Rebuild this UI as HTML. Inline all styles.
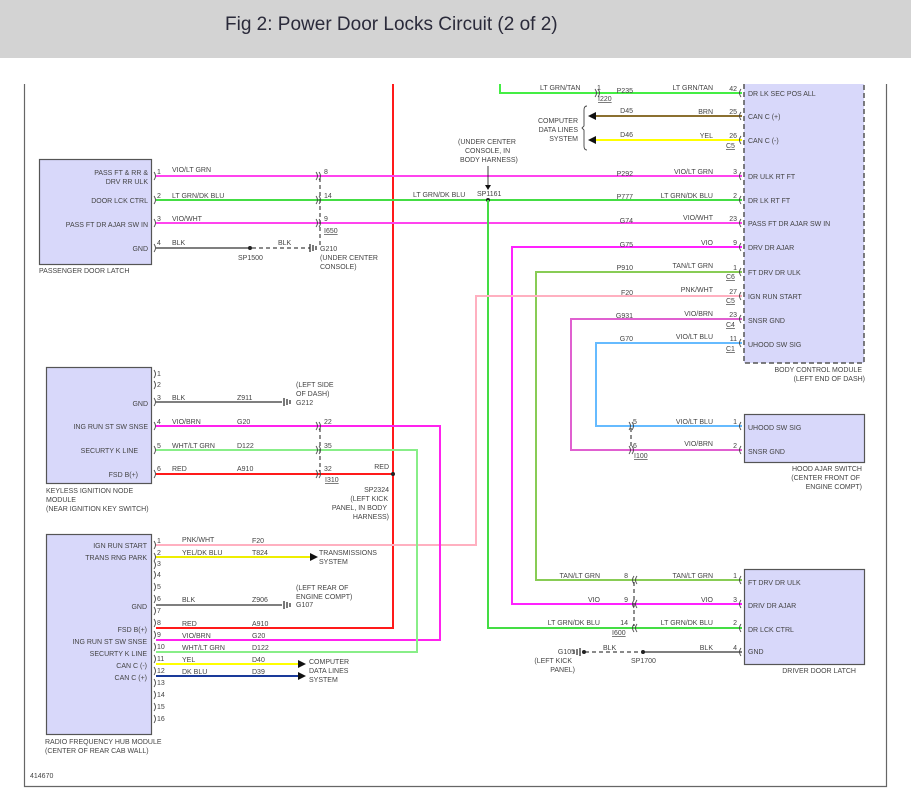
<!DOCTYPE html>
<html><head><meta charset="utf-8"><style>
html,body{margin:0;padding:0;background:#fff;width:911px;height:803px;overflow:hidden}
svg{display:block}
text{font-family:"Liberation Sans",Arial,sans-serif;font-size:7px;fill:#444}
.t{font-size:19px;fill:#2a2a3a}
.w{fill:none;stroke-width:2}
.c{fill:none;stroke:#444;stroke-width:0.9}
.d{stroke:#444;stroke-width:1.2;stroke-dasharray:4 3;fill:none}
.box{fill:#d8d8fa;stroke:#555;stroke-width:1.2}
</style></head><body>
<svg width="911" height="803" viewBox="0 0 911 803" xmlns="http://www.w3.org/2000/svg">
<rect x="0" y="0" width="911" height="58" fill="#d3d3d3"/>
<text class="t" x="225" y="30">Fig 2: Power Door Locks Circuit (2 of 2)</text>
<path d="M24.5 84V786.5H886.5V84" fill="none" stroke="#666" stroke-width="1.2"/>

<rect class="box" x="39.5" y="159.5" width="112" height="105"/>
<rect class="box" x="46.5" y="367.5" width="105" height="116"/>
<rect class="box" x="46.5" y="534.5" width="105" height="200"/>
<rect x="744" y="84" width="120" height="279" fill="#d8d8fa"/>
<path d="M744 84V363H864V84" fill="none" stroke="#555" stroke-width="1.5" stroke-dasharray="5 3"/>
<rect class="box" x="744.5" y="414.5" width="120" height="48"/>
<rect class="box" x="744.5" y="569.5" width="120" height="95"/>

<path class="w" stroke="#ff1a1a" d="M393 84V628H156"/>
<path class="w" stroke="#ff1a1a" d="M156 474H393"/>
<circle cx="393" cy="474" r="2" fill="#222"/>

<path class="w" stroke="#ff44ee" d="M156 176H742"/>
<path class="w" stroke="#44dd44" d="M156 200H742"/>
<path class="w" stroke="#ff44ee" d="M156 223H742"/>
<path stroke="#555" stroke-width="1.5" d="M156 248H250"/>
<path class="d" d="M252 248H310"/>
<circle cx="250" cy="248" r="2" fill="#222"/>
<path d="M310 244V252M313 245V251M316 246V250" stroke="#222" stroke-width="1.2"/>

<path class="w" stroke="#44ee44" d="M500 84V93H742"/>
<path class="w" stroke="#8b7030" d="M596 116H742"/>
<path class="w" stroke="#ffff00" d="M596 140H742"/>
<polygon points="588,116 596,112 596,120" fill="#111"/>
<polygon points="588,140 596,136 596,144" fill="#111"/>
<path d="M587 106 Q584 106 584 110 V126 L582 128 L584 130 V146 Q584 150 587 150" class="c"/>

<path stroke="#222" stroke-width="0.9" d="M488 166V186"/><polygon points="485,185 491,185 488,190" fill="#111"/>
<circle cx="488" cy="200" r="2" fill="#222"/>
<path class="w" stroke="#44dd44" d="M488 200V628H742"/>
<path class="w" stroke="#ff22ff" d="M742 247H512V604H742"/>
<path class="w" stroke="#88cc55" d="M742 272H536V580H742"/>
<path class="w" stroke="#ffb0c0" d="M742 296H476V545H156"/>
<path class="w" stroke="#e060d0" d="M742 319H571V450H742"/>
<path class="w" stroke="#66bbff" d="M742 343H596V426H742"/>

<path stroke="#555" stroke-width="1.5" d="M156 402H282"/>
<path d="M284 398V406M287 399V405M290 400V404" stroke="#222" stroke-width="1.2"/>
<path class="w" stroke="#ff22ee" d="M156 426H440V640H156"/>
<path class="w" stroke="#88ee88" d="M156 450H417V652H156"/>

<path class="w" stroke="#eeee00" d="M156 557H310"/><polygon points="310,553 318,557 310,561" fill="#111"/>
<path stroke="#555" stroke-width="1.5" d="M156 605H282"/>
<path d="M284 601V609M287 602V608M290 603V607" stroke="#222" stroke-width="1.2"/>
<path class="w" stroke="#ffff00" d="M156 664H298"/><polygon points="298,660 306,664 298,668" fill="#111"/>
<path class="w" stroke="#1a3a9a" d="M156 676H298"/><polygon points="298,672 306,676 298,680" fill="#111"/>

<path stroke="#555" stroke-width="1.5" d="M643 652H742"/>
<path class="d" d="M585 652H641"/>
<circle cx="643" cy="652" r="2" fill="#222"/><circle cx="584" cy="652" r="2" fill="#222"/>
<path d="M580 648V656M577 649V655M574 650V654" stroke="#222" stroke-width="1.2"/>

<path class="d" d="M320 178V247"/><path class="d" d="M320 428V472"/>
<path class="d" d="M631 428V448"/><path class="d" d="M634 582V626"/>
<g class="c">
<path d="M154 172q3 4 0 8M154 196q3 4 0 8M154 219q3 4 0 8M154 244q3 4 0 8"/>
<path d="M154 370q3 4 0 8M154 381q3 4 0 8M154 398q3 4 0 8M154 422q3 4 0 8M154 446q3 4 0 8M154 470q3 4 0 8"/>
<path d="M154 541q3 4 0 8M154 553q3 4 0 8M154 561q3 4 0 8M154 571q3 4 0 8M154 583q3 4 0 8M154 595q3 4 0 8M154 607q3 4 0 8M154 619q3 4 0 8M154 631q3 4 0 8M154 643q3 4 0 8M154 655q3 4 0 8M154 667q3 4 0 8M154 679q3 4 0 8M154 691q3 4 0 8M154 703q3 4 0 8M154 715q3 4 0 8"/>
<path d="M316 172q3 4 0 8M319 172q3 4 0 8M316 196q3 4 0 8M319 196q3 4 0 8M316 219q3 4 0 8M319 219q3 4 0 8"/>
<path d="M316 422q3 4 0 8M319 422q3 4 0 8M316 446q3 4 0 8M319 446q3 4 0 8M316 470q3 4 0 8M319 470q3 4 0 8"/>
<path d="M595 89q3 4 0 8M598 89q3 4 0 8"/>
<path d="M629 422q3 4 0 8M632 422q3 4 0 8M629 446q3 4 0 8M632 446q3 4 0 8"/>
<path d="M634 576q-3 4 0 8M637 576q-3 4 0 8M634 600q-3 4 0 8M637 600q-3 4 0 8M634 624q-3 4 0 8M637 624q-3 4 0 8"/>
<path d="M741 89q-3 4 0 8M741 112q-3 4 0 8M741 136q-3 4 0 8M741 172q-3 4 0 8M741 196q-3 4 0 8M741 219q-3 4 0 8M741 243q-3 4 0 8M741 268q-3 4 0 8M741 292q-3 4 0 8M741 315q-3 4 0 8M741 339q-3 4 0 8"/>
<path d="M741 422q-3 4 0 8M741 446q-3 4 0 8M741 576q-3 4 0 8M741 600q-3 4 0 8M741 624q-3 4 0 8M741 648q-3 4 0 8"/>
</g>

<g text-anchor="end">
<text x="148" y="175">PASS FT &amp; RR &amp;</text><text x="148" y="184">DRV RR ULK</text>
<text x="148" y="203">DOOR LCK CTRL</text><text x="148" y="227">PASS FT DR AJAR SW IN</text><text x="148" y="251">GND</text>
<text x="148" y="406">GND</text><text x="148" y="429">ING RUN ST SW SNSE</text><text x="138" y="453">SECURTY K LINE</text><text x="138" y="477">FSD B(+)</text>
<text x="147" y="548">IGN RUN START</text><text x="147" y="560">TRANS RNG PARK</text><text x="147" y="609">GND</text>
<text x="147" y="632">FSD B(+)</text><text x="147" y="644">ING RUN ST SW SNSE</text><text x="147" y="656">SECURTY K LINE</text>
<text x="147" y="668">CAN C (-)</text><text x="147" y="680">CAN C (+)</text>
<text x="389" y="469">RED</text><text x="389" y="492">SP2324</text><text x="388" y="501">(LEFT KICK</text><text x="387" y="510">PANEL, IN BODY</text><text x="389" y="519">HARNESS)</text>
<text x="633" y="113">D45</text><text x="633" y="137">D46</text>
<text x="578" y="123">COMPUTER</text><text x="578" y="132">DATA LINES</text><text x="578" y="141">SYSTEM</text>
<text x="633" y="93">P235</text><text x="633" y="176">P292</text><text x="633" y="199">P777</text><text x="633" y="223">G74</text><text x="633" y="247">G75</text><text x="633" y="270">P910</text><text x="633" y="295">F20</text><text x="633" y="318">G931</text><text x="633" y="341">G70</text>
<text x="713" y="90">LT GRN/TAN</text><text x="713" y="114">BRN</text><text x="713" y="138">YEL</text><text x="713" y="174">VIO/LT GRN</text><text x="713" y="198">LT GRN/DK BLU</text><text x="713" y="220">VIO/WHT</text><text x="713" y="245">VIO</text><text x="713" y="268">TAN/LT GRN</text><text x="713" y="292">PNK/WHT</text><text x="713" y="316">VIO/BRN</text><text x="713" y="339">VIO/LT BLU</text>
<text x="713" y="424">VIO/LT BLU</text><text x="713" y="446">VIO/BRN</text>
<text x="600" y="578">TAN/LT GRN</text><text x="600" y="602">VIO</text><text x="600" y="625">LT GRN/DK BLU</text>
<text x="713" y="578">TAN/LT GRN</text><text x="713" y="602">VIO</text><text x="713" y="625">LT GRN/DK BLU</text><text x="713" y="650">BLK</text>
<text x="737" y="91">42</text><text x="737" y="114">25</text><text x="737" y="138">26</text><text x="737" y="174">3</text><text x="737" y="198">2</text><text x="737" y="221">23</text><text x="737" y="245">9</text><text x="737" y="270">1</text><text x="737" y="294">27</text><text x="737" y="317">23</text><text x="737" y="341">11</text>
<text x="737" y="424">1</text><text x="737" y="448">2</text><text x="737" y="578">1</text><text x="737" y="602">3</text><text x="737" y="625">2</text><text x="737" y="650">4</text>
<text x="628" y="578">8</text><text x="628" y="602">9</text><text x="628" y="625">14</text>
<text x="862" y="372">BODY CONTROL MODULE</text><text x="865" y="381">(LEFT END OF DASH)</text>
<text x="862" y="471">HOOD AJAR SWITCH</text><text x="860" y="480">(CENTER FRONT OF</text><text x="862" y="489">ENGINE COMPT)</text>
<text x="856" y="673">DRIVER DOOR LATCH</text>
<text x="575" y="654">G105</text><text x="572" y="663">(LEFT KICK</text><text x="575" y="672">PANEL)</text>
</g>
<g>
<text x="157" y="174">1</text><text x="172" y="172">VIO/LT GRN</text>
<text x="157" y="198">2</text><text x="172" y="198">LT GRN/DK BLU</text>
<text x="157" y="221">3</text><text x="172" y="221">VIO/WHT</text>
<text x="157" y="245">4</text><text x="172" y="245">BLK</text><text x="278" y="245">BLK</text>
<text x="238" y="260">SP1500</text><text x="320" y="251">G210</text><text x="320" y="260">(UNDER CENTER</text><text x="320" y="269">CONSOLE)</text>
<text x="39" y="273">PASSENGER DOOR LATCH</text>
<text x="324" y="174">8</text><text x="324" y="198">14</text><text x="324" y="221">9</text><text x="324" y="233" text-decoration="underline">I650</text>
<text x="413" y="197">LT GRN/DK BLU</text>
<text x="458" y="144">(UNDER CENTER</text><text x="465" y="153">CONSOLE, IN</text><text x="460" y="162">BODY HARNESS)</text>
<text x="477" y="196">SP1161</text>
<text x="540" y="90">LT GRN/TAN</text><text x="597" y="90">1</text><text x="598" y="101" text-decoration="underline">I220</text>
<text x="726" y="148" text-decoration="underline">C5</text><text x="726" y="279" text-decoration="underline">C6</text><text x="726" y="303" text-decoration="underline">C5</text><text x="726" y="327" text-decoration="underline">C4</text><text x="726" y="351" text-decoration="underline">C1</text>
<text x="748" y="96">DR LK SEC POS ALL</text><text x="748" y="119">CAN C (+)</text><text x="748" y="143">CAN C (-)</text><text x="748" y="179">DR ULK RT FT</text><text x="748" y="203">DR LK RT FT</text><text x="748" y="226">PASS FT DR AJAR SW IN</text><text x="748" y="250">DRV DR AJAR</text><text x="748" y="275">FT DRV DR ULK</text><text x="748" y="299">IGN RUN START</text><text x="748" y="323">SNSR GND</text><text x="748" y="347">UHOOD SW SIG</text>
<text x="748" y="430">UHOOD SW SIG</text><text x="748" y="454">SNSR GND</text>
<text x="748" y="585">FT DRV DR ULK</text><text x="748" y="608">DRIV DR AJAR</text><text x="748" y="632">DR LCK CTRL</text><text x="748" y="654">GND</text>
<text x="633" y="424">5</text><text x="633" y="448">6</text><text x="634" y="458" text-decoration="underline">I100</text>
<text x="612" y="635" text-decoration="underline">I600</text>
<text x="603" y="650">BLK</text><text x="631" y="663">SP1700</text>
<text x="157" y="376">1</text><text x="157" y="387">2</text><text x="157" y="400">3</text><text x="172" y="400">BLK</text><text x="237" y="400">Z911</text>
<text x="296" y="387">(LEFT SIDE</text><text x="296" y="396">OF DASH)</text><text x="296" y="405">G212</text>
<text x="157" y="424">4</text><text x="172" y="424">VIO/BRN</text><text x="237" y="424">G20</text><text x="324" y="424">22</text>
<text x="157" y="448">5</text><text x="172" y="448">WHT/LT GRN</text><text x="237" y="448">D122</text><text x="324" y="448">35</text>
<text x="157" y="471">6</text><text x="172" y="471">RED</text><text x="237" y="471">A910</text><text x="324" y="471">32</text><text x="325" y="482" text-decoration="underline">I310</text>
<text x="46" y="493">KEYLESS IGNITION NODE</text><text x="46" y="502">MODULE</text><text x="46" y="511">(NEAR IGNITION KEY SWITCH)</text>
<text x="157" y="543">1</text><text x="182" y="542">PNK/WHT</text><text x="252" y="543">F20</text>
<text x="157" y="555">2</text><text x="182" y="555">YEL/DK BLU</text><text x="252" y="555">T824</text>
<text x="319" y="555">TRANSMISSIONS</text><text x="319" y="564">SYSTEM</text>
<text x="157" y="566">3</text><text x="157" y="577">4</text><text x="157" y="589">5</text><text x="157" y="601">6</text><text x="182" y="602">BLK</text><text x="252" y="602">Z906</text>
<text x="296" y="590">(LEFT REAR OF</text><text x="296" y="599">ENGINE COMPT)</text><text x="296" y="607">G107</text>
<text x="157" y="613">7</text><text x="157" y="625">8</text><text x="182" y="626">RED</text><text x="252" y="626">A910</text>
<text x="157" y="637">9</text><text x="182" y="638">VIO/BRN</text><text x="252" y="638">G20</text>
<text x="157" y="649">10</text><text x="182" y="650">WHT/LT GRN</text><text x="252" y="650">D122</text>
<text x="157" y="661">11</text><text x="182" y="662">YEL</text><text x="252" y="662">D40</text>
<text x="157" y="673">12</text><text x="182" y="674">DK BLU</text><text x="252" y="674">D39</text>
<text x="309" y="664">COMPUTER</text><text x="309" y="673">DATA LINES</text><text x="309" y="682">SYSTEM</text>
<text x="157" y="685">13</text><text x="157" y="697">14</text><text x="157" y="709">15</text><text x="157" y="721">16</text>
<text x="45" y="744">RADIO FREQUENCY HUB MODULE</text><text x="45" y="753">(CENTER OF REAR CAB WALL)</text>
<text x="30" y="778">414670</text>
</g>
</svg>
</body></html>
